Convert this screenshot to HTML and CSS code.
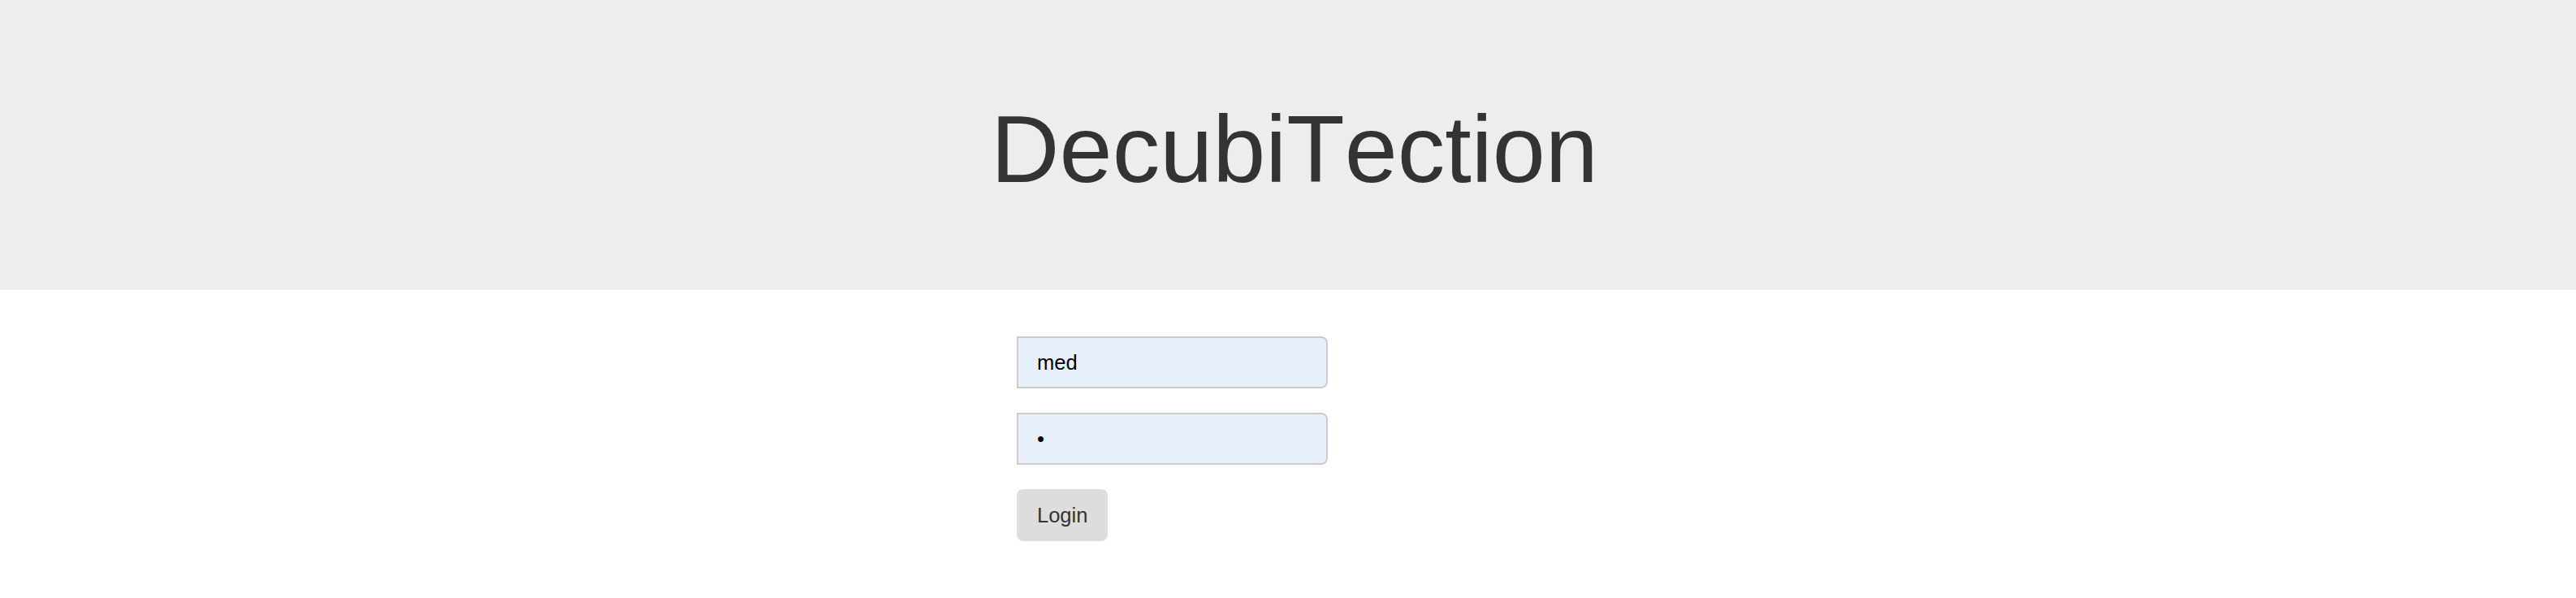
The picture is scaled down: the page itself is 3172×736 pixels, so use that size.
FILE: index.html
```html
<!DOCTYPE html>
<html lang="en">
<head>
<meta charset="utf-8">
<title>DecubiTection</title>
<link rel="stylesheet" href="styles.css">
</head>
<body>
<header class="masthead">
  <h1 class="title">DecubiTection</h1>
</header>
<main class="login">
  <form class="login-form">
    <input class="field" type="text" value="med" aria-label="Username">
    <input class="field" type="password" value="x" aria-label="Password">
    <button class="btn" type="button">Login</button>
  </form>
</main>
</body>
</html>
```

FILE: styles.css
```css
html, body {
  margin: 0;
  padding: 0;
  background: #ffffff;
  font-family: "Liberation Sans", Arial, sans-serif;
}

.masthead {
  background: #ededed;
  height: 357px;
  box-sizing: border-box;
  padding-top: 117px;
  padding-left: 16px;
  text-align: center;
}

.title {
  margin: 0;
  font-weight: normal;
  font-size: 117px;
  line-height: 133px;
  font-kerning: none;
  color: #333333;
}

.login {
  width: 668px;
  margin: 57px auto 0;
}

.login-form {
  display: flex;
  flex-direction: column;
  align-items: flex-start;
  gap: 30px;
}

.field {
  width: 383px;
  height: 64px;
  box-sizing: border-box;
  margin: 0;
  padding: 0 23px;
  border: 2px solid #cbcbcb;
  border-radius: 0 8px 8px 0;
  background: #e8f0fe;
  color: #000000;
  font-family: "Liberation Sans", Arial, sans-serif;
  font-size: 25.5px;
  outline: none;
}

.btn {
  height: 64px;
  box-sizing: border-box;
  margin: 0;
  padding: 0 25px;
  border: none;
  border-radius: 8px;
  background: #dddddd;
  color: #333333;
  font-family: "Liberation Sans", Arial, sans-serif;
  font-size: 25.5px;
  cursor: pointer;
}
```
